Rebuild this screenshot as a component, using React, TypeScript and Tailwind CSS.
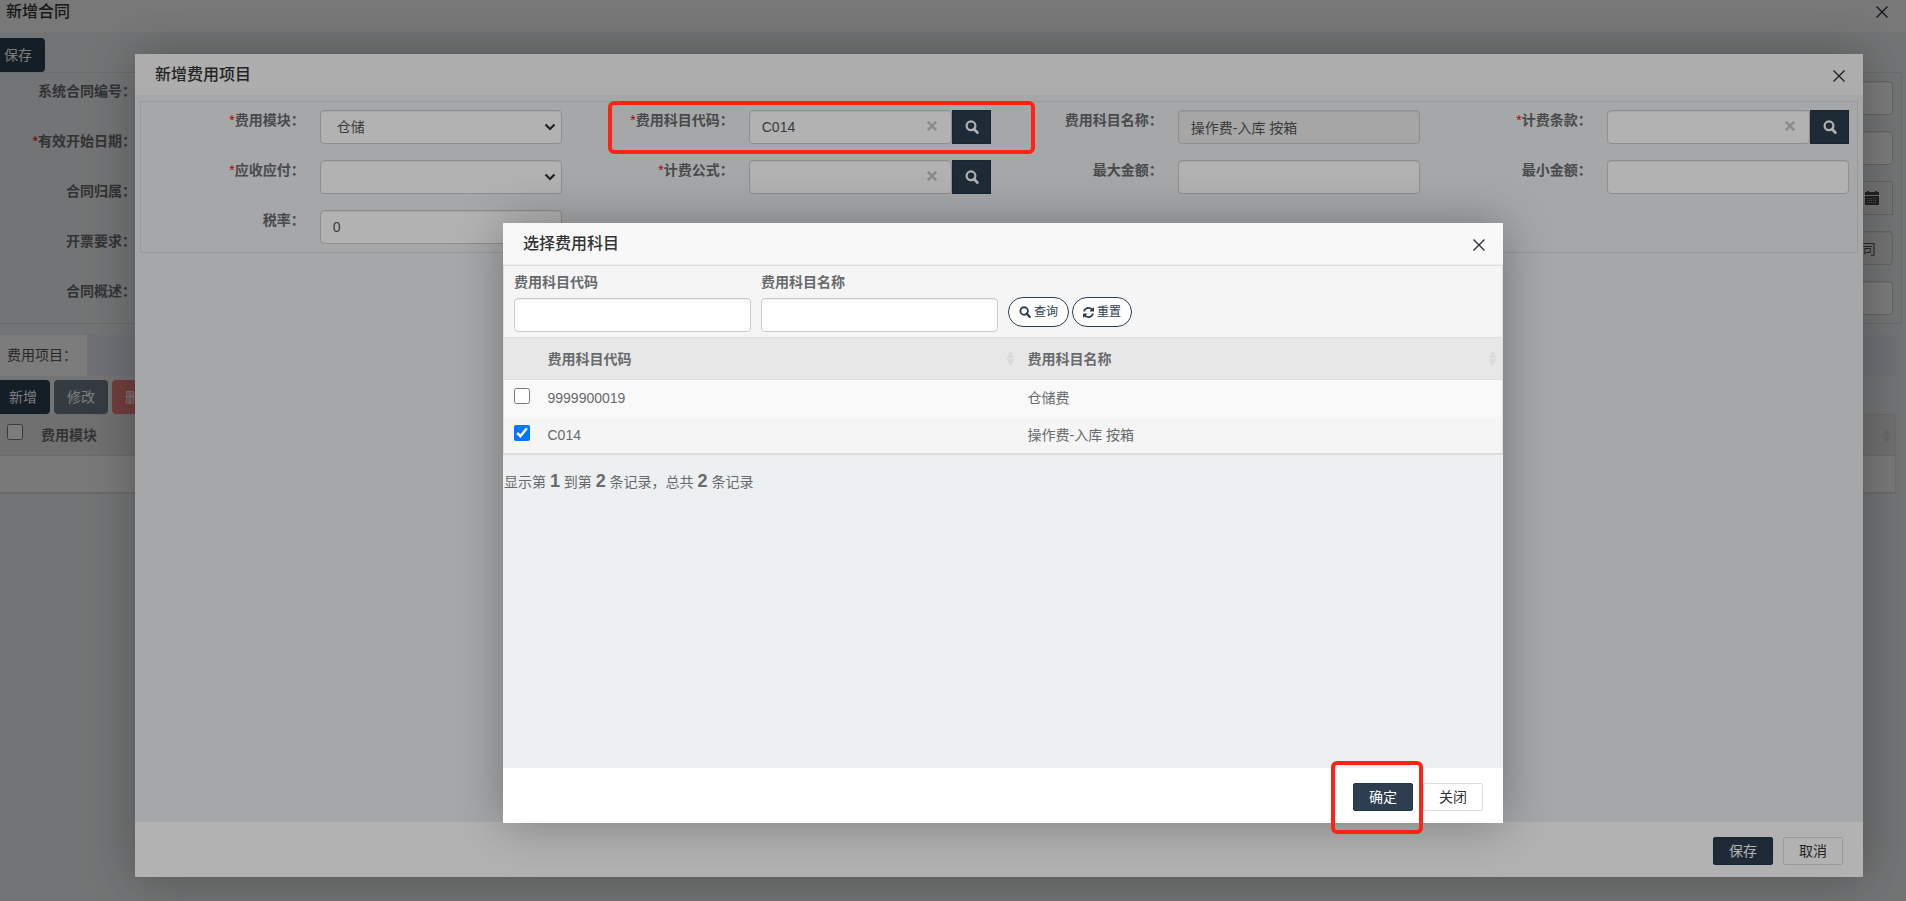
import { useState } from "react";
import type { ReactNode } from "react";
import { clsx } from "clsx";

const inputBase =
  "h-[34px] w-full min-w-0 rounded border border-[#ccc] px-3 text-sm text-[#555] shadow-[inset_0_1px_1px_rgba(0,0,0,0.075)] outline-none";
const inputClass = clsx(inputBase, "bg-white");
const readOnlyClass = clsx(inputBase, "bg-[#eee]");

function SearchIcon({ className }: { className?: string }) {
  return (
    <svg viewBox="0 0 14 14" fill="none" stroke="currentColor" className={className} aria-hidden="true">
      <circle cx="6" cy="5.8" r="4.4" strokeWidth="2.2" />
      <path d="M9 9l3.4 3.6" strokeWidth="2.8" strokeLinecap="round" />
    </svg>
  );
}

function RefreshIcon({ className }: { className?: string }) {
  return (
    <svg viewBox="128 128 1536 1536" fill="currentColor" className={className} aria-hidden="true">
      <path d="M1639 1056q0 5-1 7-64 268-268 434.5t-478 166.5q-146 0-282.5-55t-243.5-157l-129 129q-19 19-45 19t-45-19-19-45v-448q0-26 19-45t45-19h448q26 0 45 19t19 45-19 45l-137 137q71 66 161 102t187 36q134 0 250-65t186-179q11-17 53-117 8-23 30-23h192q13 0 22.5 9.5t9.5 22.5zm25-800v448q0 26-19 45t-45 19h-448q-26 0-45-19t-19-45 19-45l138-138q-148-137-349-137-134 0-250 65t-186 179q-11 17-53 117-8 23-30 23h-199q-13 0-22.5-9.5t-9.5-22.5v-7q65-268 270-434.5t480-166.5q146 0 284 55.5t245 156.5l130-129q19-19 45-19t45 19 19 45z" />
    </svg>
  );
}

function CalendarIcon() {
  return (
    <svg viewBox="0 0 14 14" className="size-[14px]" aria-hidden="true">
      <path d="M0 1h2V0h2v1h6V0h2v1h2v3H0zM0 5h14v9H0z" fill="#444" />
      <path d="M2 7.5h10M2 9.5h10M2 11.5h10" stroke="#aaa" strokeWidth="1" strokeDasharray="1 1" />
    </svg>
  );
}

function CloseButton() {
  return (
    <button type="button" aria-label="关闭窗口" className="flex size-4 items-center justify-center">
      <svg viewBox="0 0 12 12" className="size-3" fill="none" stroke="#2e2d3c" strokeWidth="1.4">
        <path d="M0.5 0.5l11 11M11.5 0.5l-11 11" />
      </svg>
    </button>
  );
}

function SortIcon() {
  return (
    <svg viewBox="0 0 9 15" className="h-[15px] w-[9px] shrink-0" fill="#d9d9d9" aria-hidden="true">
      <path d="M4.5 0L8.5 7h-8zM0.5 8h8l-4 7z" />
    </svg>
  );
}

function Field({ id, label, required, children }: { id: string; label: string; required?: boolean; children: ReactNode }) {
  return (
    <div className="flex">
      <label htmlFor={id} className="w-5/12 shrink-0 pr-[15px] text-right text-sm font-semibold text-[#676a6c]">
        {required && <span className="font-normal text-[#f00]">*</span>}
        {label}：
      </label>
      <div className="min-w-0 flex-1 pr-2">{children}</div>
    </div>
  );
}

function SelectInput({ id, options }: { id: string; options: string[] }) {
  return (
    <div className="relative">
      <select id={id} className={clsx(inputClass, "appearance-none pl-4")}>
        {options.map((o) => (
          <option key={o}>{o}</option>
        ))}
      </select>
      <svg
        viewBox="0 0 12 8"
        className="pointer-events-none absolute top-[13px] right-[6px] h-2 w-3"
        fill="none"
        stroke="#333"
        strokeWidth="2.2"
      >
        <path d="M1.5 1.5L6 6l4.5-4.5" />
      </svg>
    </div>
  );
}

function LookupInput({ id, value }: { id: string; value?: string }) {
  return (
    <div className="flex">
      <div className="relative min-w-0 flex-1">
        <input id={id} className={inputClass} defaultValue={value} />
        <button type="button" aria-label="清除" className="absolute top-[11px] right-[15px] text-[#c8c8c8]">
          <svg viewBox="0 0 10 10" className="size-[10px]" stroke="currentColor" strokeWidth="2.6">
            <path d="M0.8 0.8l8.4 8.4M9.2 0.8l-8.4 8.4" />
          </svg>
        </button>
      </div>
      <button
        type="button"
        aria-label="查找"
        className="flex h-[34px] w-[39px] items-center justify-center border border-[#24364a] bg-[#2c3e50] text-white"
      >
        <SearchIcon className="size-[14px]" />
      </button>
    </div>
  );
}

function DialogHeader({ title }: { title: string }) {
  return (
    <div className="flex h-[42px] shrink-0 items-center justify-between border-b border-[#eee] bg-[#f8f8f8] pr-4 pl-5">
      <h2 className="text-base font-medium text-[#333]">{title}</h2>
      <div className="pt-[3px]">
        <CloseButton />
      </div>
    </div>
  );
}

function DialogFooter({ ok, cancel }: { ok: string; cancel: string }) {
  return (
    <div className="flex shrink-0 justify-end gap-[10px] bg-white px-5 pt-[15px] pb-3 text-sm">
      <button type="button" className="h-7 w-[60px] rounded-xs border border-[#24364a] bg-[#2c3e50] text-white">
        {ok}
      </button>
      <button type="button" className="h-7 w-[60px] rounded-xs border border-[#dedede] bg-white text-[#333]">
        {cancel}
      </button>
    </div>
  );
}

const contractLabels = [
  { label: "系统合同编号" },
  { label: "有效开始日期", required: true },
  { label: "合同归属" },
  { label: "开票要求" },
  { label: "合同概述" },
];

function ContractPage() {
  return (
    <div className="flex h-full flex-col">
      <div className="flex h-8 shrink-0 items-start justify-between bg-[#f8f8f8] pt-1 pr-4 pl-[6px]">
        <h1 className="text-base leading-4 font-medium text-[#333]">新增合同</h1>
        <CloseButton />
      </div>
      <div className="pt-[6px] pr-1">
        <button type="button" className="h-[34px] w-[45px] rounded-r bg-[#2c3e50] pl-1 text-left text-sm text-white">
          保存
        </button>
        <div className="flex justify-between border-y border-r border-[#ddd] py-2 pr-2">
          <div className="flex w-[136px] flex-col gap-[30px] text-right text-sm font-semibold whitespace-nowrap text-[#676a6c]">
            {contractLabels.map((row) => (
              <span key={row.label}>
                {row.required && <span className="font-normal text-[#f00]">*</span>}
                {row.label}：
              </span>
            ))}
          </div>
          <div className="flex w-[240px] flex-col gap-4">
            <input aria-label="合同名称" className={inputClass} />
            <input aria-label="有效结束日期" className={inputClass} />
            <div className="flex h-[34px] items-center justify-end border border-[#ccc] bg-[#eee] pr-[13px]">
              <CalendarIcon />
            </div>
            <input aria-label="公司" readOnly defaultValue="公司" className={clsx(readOnlyClass, "pr-4 text-right")} />
            <input aria-label="备注" className={inputClass} />
          </div>
        </div>
      </div>
      <div className="pt-[11px] pr-[10px]">
        <div className="flex h-[41px] bg-[#e6e8f2]">
          <button type="button" className="w-[87px] bg-white pb-[2px] pl-[7px] text-left text-sm text-[#555]">
            费用项目：
          </button>
        </div>
        <div className="flex gap-1 pt-1 text-sm text-white">
          <button type="button" className="h-[34px] w-[50px] rounded-r bg-[#2c3e50] pr-1 text-center">新增</button>
          <button type="button" disabled className="h-[34px] w-[54px] rounded bg-[#6c7b89]">修改</button>
          <button type="button" disabled className="h-[34px] w-[54px] rounded bg-[#e8827d]">删除</button>
        </div>
        <table className="w-full border-r border-b-2 border-[#ddd] text-left text-sm text-[#676a6c]">
          <thead>
            <tr className="h-[41px] border-y border-[#ddd] bg-[#e7e7e7]">
              <th className="w-[34px] pl-[7px] align-top">
                <input type="checkbox" aria-label="全选" className="mt-[9px] block size-4" />
              </th>
              <th className="pl-[7px] font-semibold">
                <div className="flex items-center justify-between pr-1">
                  费用模块
                  <SortIcon />
                </div>
              </th>
            </tr>
          </thead>
          <tbody>
            <tr className="h-[37px] bg-[#f9f9f9]">
              <td colSpan={2} />
            </tr>
          </tbody>
        </table>
      </div>
    </div>
  );
}

function FeeItemDialog() {
  return (
    <div className="flex flex-1 flex-col rounded-xs bg-[#ecf0f1] shadow-[1px_1px_50px_rgba(0,0,0,0.3)]">
      <DialogHeader title="新增费用项目" />
      <div className="flex-1 p-[5px]">
        <form className="grid grid-cols-4 gap-y-4 border border-[#ddd] py-2">
          <Field id="module" label="费用模块" required>
            <SelectInput id="module" options={["仓储"]} />
          </Field>
          <Field id="subjectCode" label="费用科目代码" required>
            <LookupInput id="subjectCode" value="C014" />
          </Field>
          <Field id="subjectName" label="费用科目名称">
            <input id="subjectName" readOnly defaultValue="操作费-入库 按箱" className={readOnlyClass} />
          </Field>
          <Field id="clause" label="计费条款" required>
            <LookupInput id="clause" />
          </Field>
          <Field id="direction" label="应收应付" required>
            <SelectInput id="direction" options={[""]} />
          </Field>
          <Field id="formula" label="计费公式" required>
            <LookupInput id="formula" />
          </Field>
          <Field id="maxAmount" label="最大金额">
            <input id="maxAmount" className={inputClass} />
          </Field>
          <Field id="minAmount" label="最小金额">
            <input id="minAmount" className={inputClass} />
          </Field>
          <Field id="taxRate" label="税率">
            <input id="taxRate" defaultValue="0" className={inputClass} />
          </Field>
        </form>
      </div>
      <DialogFooter ok="保存" cancel="取消" />
    </div>
  );
}

const subjects = [
  { code: "9999900019", name: "仓储费" },
  { code: "C014", name: "操作费-入库 按箱" },
];

function SubjectDialog() {
  const [selected, setSelected] = useState("C014");

  return (
    <div className="flex h-[600px] w-[1000px] flex-col rounded-xs bg-[#ecf0f1] shadow-[1px_1px_50px_rgba(0,0,0,0.3)]">
      <DialogHeader title="选择费用科目" />
      <div className="flex-1 text-sm text-[#676a6c]">
        <form className="flex gap-[10px] border border-b-0 border-[#ddd] bg-[#f5f5f5] px-[10px] pt-[6px] pb-[5px]">
          <div className="w-[237px]">
            <label htmlFor="qCode" className="block pb-[6px] font-semibold">费用科目代码</label>
            <input id="qCode" className={inputClass} />
          </div>
          <div className="w-[237px]">
            <label htmlFor="qName" className="block pb-[6px] font-semibold">费用科目名称</label>
            <input id="qName" className={inputClass} />
          </div>
          <div className="flex items-start gap-[3px] pt-[25px] text-xs text-[#2c3e50]">
            <button type="button" className="flex h-[30px] w-[61px] items-center justify-center gap-[3px] rounded-full border border-[#2c3e50] bg-white">
              <SearchIcon className="size-3" />
              查询
            </button>
            <button type="button" className="flex h-[30px] w-[60px] items-center justify-center gap-[3px] rounded-full border border-[#2c3e50] bg-white">
              <RefreshIcon className="size-[11px]" />
              重置
            </button>
          </div>
        </form>
        <table className="w-full table-fixed border-x border-b-2 border-[#ddd] text-left">
          <thead>
            <tr className="h-[42px] border-y border-[#ddd] bg-[#e7e7e7]">
              <th className="w-9" />
              <th className="w-[480px] pr-[5px] pl-2 font-semibold">
                <div className="flex items-center justify-between">
                  费用科目代码
                  <SortIcon />
                </div>
              </th>
              <th className="pr-[5px] pl-2 font-semibold">
                <div className="flex items-center justify-between">
                  费用科目名称
                  <SortIcon />
                </div>
              </th>
            </tr>
          </thead>
          <tbody>
            {subjects.map((s) => (
              <tr key={s.code} className="h-[37px] odd:bg-[#f9f9f9] even:bg-[#f5f5f5]">
                <td className="pl-[10px] align-top">
                  <input
                    type="checkbox"
                    aria-label={s.code}
                    checked={selected === s.code}
                    onChange={() => setSelected(s.code)}
                    className="mt-2 block size-4 accent-[#0075ff]"
                  />
                </td>
                <td className="pl-2">{s.code}</td>
                <td className="pl-2">{s.name}</td>
              </tr>
            ))}
          </tbody>
        </table>
        <p className="pt-3 pl-px leading-7">
          显示第 <b className="text-lg">1</b> 到第 <b className="text-lg">2</b> 条记录，总共 <b className="text-lg">2</b> 条记录
        </p>
      </div>
      <DialogFooter ok="确定" cancel="关闭" />
    </div>
  );
}

export default function App() {
  return (
    <div className="relative h-screen overflow-hidden bg-[#ecf0f1] font-['Liberation_Sans','Noto_Sans_CJK_SC',sans-serif]">
      <ContractPage />
      <div className="absolute inset-0 flex bg-black/30 pt-[54px] pr-[43px] pb-6 pl-[135px]">
        <FeeItemDialog />
      </div>
      <div className="absolute inset-0 flex items-center justify-center bg-black/30 pt-[145px] pl-[100px]">
        <SubjectDialog />
      </div>
      {/* callouts */}
      <div className="pointer-events-none absolute top-[101px] left-[608px] h-[53px] w-[427px] rounded-md border-4 border-[#ff2314]" />
      <div className="pointer-events-none absolute top-[761px] left-[1331px] h-[73px] w-[92px] rounded-md border-4 border-[#ff2314]" />
    </div>
  );
}
